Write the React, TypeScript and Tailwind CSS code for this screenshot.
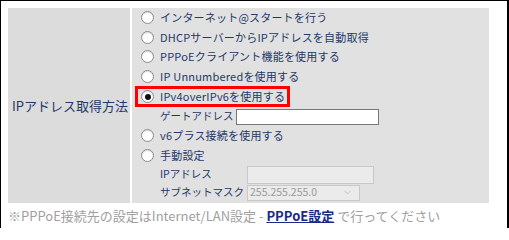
import { ChevronDown } from "lucide-react";

const font = { fontFamily: '"Noto Sans CJK JP", "Liberation Sans", sans-serif' };

function Radio({ checked = false }: { checked?: boolean }) {
  return (
    <span className="flex h-[13px] w-[13px] shrink-0 items-center justify-center rounded-full border border-[#8a8a8a] bg-white shadow-[inset_0_1px_1px_rgba(0,0,0,0.15)]">
      {checked && <span className="h-[6px] w-[6px] rounded-full bg-[#111]" />}
    </span>
  );
}

function Option({ label }: { label: string }) {
  return (
    <div className="flex h-[19.5px] items-center pl-[9px]">
      <Radio />
      <span className="ml-[6px] whitespace-nowrap tracking-[0.2px]">{label}</span>
    </div>
  );
}

export default function App() {
  return (
    <div
      className="h-[228px] w-[509px] overflow-hidden border-l border-r-2 border-t border-black bg-white pl-[7px] pt-[7px] text-[#23386a]"
      style={font}
    >
      <div className="flex w-[481px] text-[11px] leading-none">
        <div className="flex w-[124px] shrink-0 items-center whitespace-nowrap border-r-2 border-white bg-[#dcdcdc] pl-[4px] text-[13px]">
          IPアドレス取得方法
        </div>
        <div className="flex-1 bg-[#e1e1e1] pb-[2px]">
          <Option label="インターネット@スタートを行う" />
          <Option label="DHCPサーバーからIPアドレスを自動取得" />
          <Option label="PPPoEクライアント機能を使用する" />
          <Option label="IP Unnumberedを使用する" />
          <div className="ml-[3px] flex h-[21px] w-[155px] items-center border-[3px] border-[#ff0000] pl-[3px]">
            <Radio checked />
            <span className="ml-[6px] whitespace-nowrap tracking-[0.2px]">IPv4overIPv6を使用する</span>
          </div>
          <div className="flex h-[19px] items-center pl-[28px]">
            <span className="w-[76px] shrink-0 whitespace-nowrap text-[10.5px]">ゲートアドレス</span>
            <div className="h-[16px] w-[143px] border border-[#777] bg-white" />
          </div>
          <Option label="v6プラス接続を使用する" />
          <Option label="手動設定" />
          <div className="flex h-[19px] items-center pl-[28px]">
            <span className="w-[87px] shrink-0 whitespace-nowrap text-[10.5px]">IPアドレス</span>
            <div className="h-[18px] w-[127px] border border-[#c8c8c8] bg-[#ebebeb]" />
          </div>
          <div className="flex h-[17px] items-center pl-[28px]">
            <span className="w-[87px] shrink-0 whitespace-nowrap text-[10.5px]">サブネットマスク</span>
            <div className="flex h-[16px] w-[113px] items-center justify-between border border-[#c8c8c8] bg-[#ebebeb] pl-[2px] pr-[6px] text-[10.5px] text-[#9a9a9a]">
              <span>255.255.255.0</span>
              <ChevronDown size={11} strokeWidth={1.5} className="text-[#aaa]" />
            </div>
          </div>
        </div>
      </div>
      <div className="mt-[5px] whitespace-nowrap text-[13px] leading-[16px] text-[#a0a0a0]">
        ※PPPoE接続先の設定はInternet/LAN設定 -{" "}
        <span className="font-bold text-[#1a2a85] underline">PPPoE設定</span> で行ってください
      </div>
    </div>
  );
}
